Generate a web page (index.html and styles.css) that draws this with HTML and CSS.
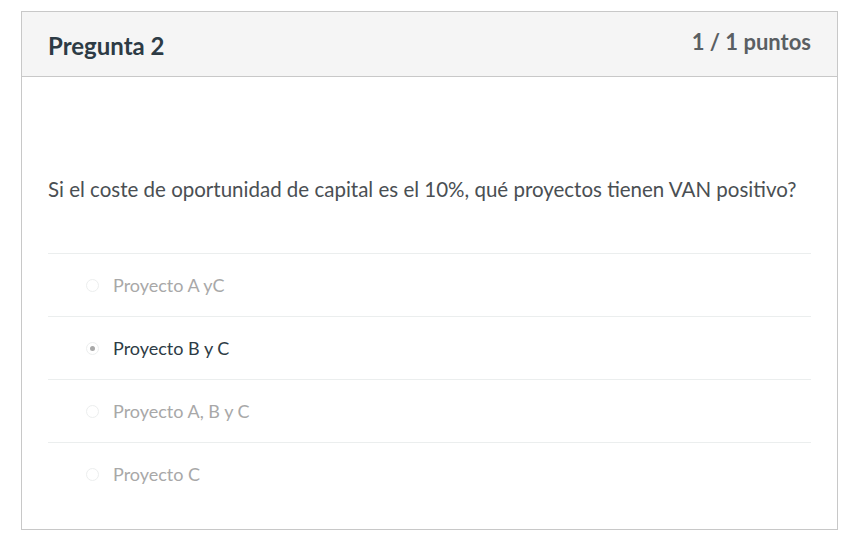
FILE: index.html
```html
<!DOCTYPE html>
<html lang="es">
<head>
<meta charset="utf-8">
<link rel="stylesheet" href="styles.css">
</head>
<body>
<div class="card">
  <div class="card-header">
    <h2 class="title">Pregunta 2</h2>
    <span class="points">1 / 1 puntos</span>
  </div>
  <div class="card-body">
    <p class="question">Si el coste de oportunidad de capital es el 10%, qué proyectos tienen VAN positivo?</p>
    <ul class="answers">
      <li class="answer"><span class="radio"></span><span class="label">Proyecto A yC</span></li>
      <li class="answer selected"><span class="radio"></span><span class="label">Proyecto B y C</span></li>
      <li class="answer"><span class="radio"></span><span class="label">Proyecto A, B y C</span></li>
      <li class="answer"><span class="radio"></span><span class="label">Proyecto C</span></li>
    </ul>
  </div>
</div>
</body>
</html>
```

FILE: styles.css
```css
* { box-sizing: border-box; }
html, body { margin: 0; padding: 0; background: #fff; }
body {
  font-family: Lato, "Open Sans", sans-serif;
  padding: 11px 0 0 21px;
}
.card {
  width: 817px;
  height: 519px;
  border: 1px solid #c8c8c8;
  background: #fff;
}
.card-header {
  height: 65px;
  background: #f5f5f5;
  border-bottom: 1px solid #c8c8c8;
  display: flex;
  align-items: flex-start;
  justify-content: space-between;
  padding: 0 26px;
}
.title {
  margin: 19px 0 0;
  font-size: 24px;
  font-weight: 700;
  color: #2d3b45;
  line-height: 30px;
}
.points {
  margin-top: 18px;
  font-size: 22px;
  font-weight: 700;
  color: #5a5f63;
  line-height: 24px;
}
.card-body {
  padding: 0 26px;
}
.question {
  margin: 0;
  padding-top: 99px;
  font-size: 20.5px;
  line-height: 26px;
  color: #4a4f53;
  height: 176px;
}
.answers {
  list-style: none;
  margin: 0;
  padding: 0;
}
.answer {
  height: 63px;
  border-top: 1px solid #ebeeee;
  display: flex;
  align-items: center;
  padding-left: 38px;
  gap: 14px;
  font-size: 18px;
  color: #a8a8a8;
}
.radio {
  width: 13px;
  height: 13px;
  border-radius: 50%;
  border: 1px solid #eceeee;
  display: flex;
  align-items: center;
  justify-content: center;
}
.selected { color: #2d3b45; }
.selected .radio::after {
  content: "";
  width: 5px;
  height: 5px;
  border-radius: 50%;
  background: #a9a9a9;
}
```
